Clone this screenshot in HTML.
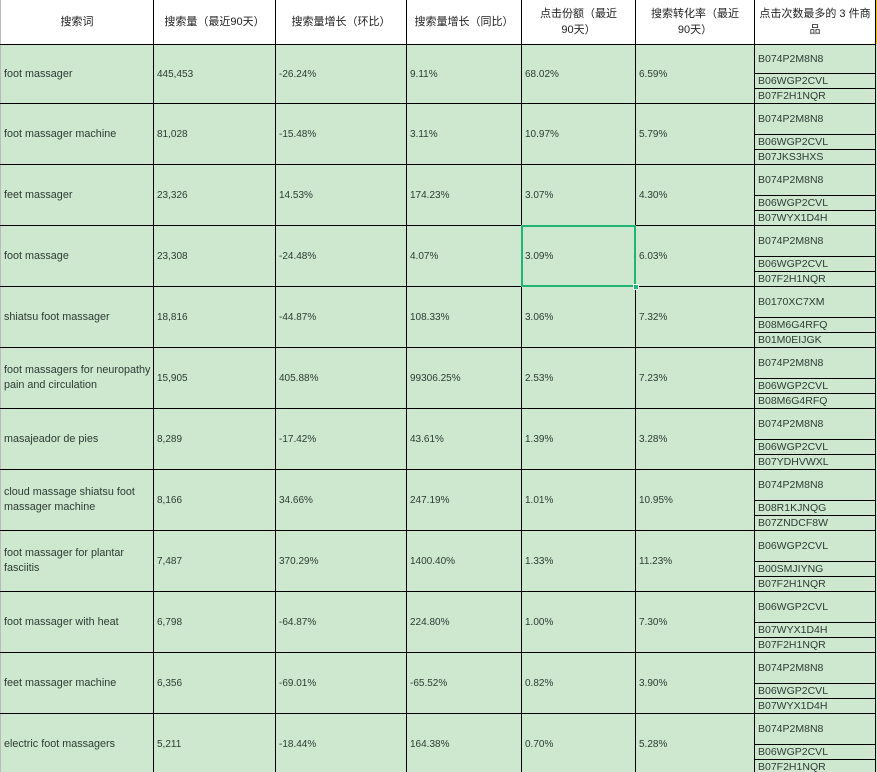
<!DOCTYPE html>
<html><head><meta charset="utf-8"><style>
html,body{margin:0;padding:0;background:#cde8cf;width:877px;height:772px;overflow:hidden;position:relative;font-family:"Liberation Sans","Noto Sans CJK SC",sans-serif;color:#2f3b35}
.hd{position:absolute;left:0;top:0;width:876px;height:44px;background:#fff}
.v{position:absolute;top:0;width:1px;height:772px;background:#000}
.h{position:absolute;left:0;width:876px;height:1px;background:#000}
.hs{position:absolute;left:754px;width:122px;height:1px;background:#000}
.r{position:absolute;left:0;width:876px}
.c{position:absolute;top:0;height:100%;display:flex;align-items:center;font-size:10px;line-height:15px;padding-left:3px;box-sizing:border-box}
.c1{left:1px;width:152px;font-size:10.8px;padding-right:2px}
.c2{left:154px;width:121px}.c3{left:276px;width:130px}.c4{left:407px;width:114px}.c5{left:522px;width:113px}.c6{left:636px;width:118px}
.s{position:absolute;left:755px;width:120px;font-size:10.5px;padding-left:3px;display:flex;align-items:center;box-sizing:border-box}
.th{position:absolute;top:0;height:44px;display:flex;align-items:center;justify-content:center;text-align:center;font-size:11px;line-height:16px;color:#222}
</style></head><body>
<div class="hd"></div>
<div class="th" style="left:1px;width:152px">搜索词</div>
<div class="th" style="left:154px;width:121px">搜索量（最近90天）</div>
<div class="th" style="left:276px;width:130px">搜索量增长（环比）</div>
<div class="th" style="left:407px;width:114px">搜索量增长（同比）</div>
<div class="th" style="left:522px;width:113px">点击份额（最近<br>90天）</div>
<div class="th" style="left:636px;width:118px">搜索转化率（最近<br>90天）</div>
<div class="th" style="left:755px;width:120px">点击次数最多的 3 件商<br>品</div>
<div class="v" style="left:0;background:#bbb"></div>
<div class="v" style="left:153px"></div><div class="v" style="left:275px"></div><div class="v" style="left:406px"></div><div class="v" style="left:521px"></div><div class="v" style="left:635px"></div><div class="v" style="left:754px"></div><div class="v" style="left:875px"></div>
<div style="position:absolute;left:876px;top:0;width:1px;height:44px;background:#f2c200"></div>
<div class="h" style="top:44px"></div><div class="h" style="top:103px"></div><div class="h" style="top:164px"></div><div class="h" style="top:225px"></div><div class="h" style="top:286px"></div><div class="h" style="top:347px"></div><div class="h" style="top:408px"></div><div class="h" style="top:469px"></div><div class="h" style="top:530px"></div><div class="h" style="top:591px"></div><div class="h" style="top:652px"></div><div class="h" style="top:713px"></div>

<div class="r" style="top:45px;height:58px"><div class="c c1">foot massager</div><div class="c c2">445,453</div><div class="c c3">-26.24%</div><div class="c c4">9.11%</div><div class="c c5">68.02%</div><div class="c c6">6.59%</div></div>
<div class="s" style="top:45px;height:28px">B074P2M8N8</div><div class="hs" style="top:73px"></div><div class="s" style="top:74px;height:14px">B06WGP2CVL</div><div class="hs" style="top:88px"></div><div class="s" style="top:89px;height:14px">B07F2H1NQR</div>

<div class="r" style="top:104px;height:60px"><div class="c c1">foot massager machine</div><div class="c c2">81,028</div><div class="c c3">-15.48%</div><div class="c c4">3.11%</div><div class="c c5">10.97%</div><div class="c c6">5.79%</div></div>
<div class="s" style="top:104px;height:30px">B074P2M8N8</div><div class="hs" style="top:134px"></div><div class="s" style="top:135px;height:14px">B06WGP2CVL</div><div class="hs" style="top:149px"></div><div class="s" style="top:150px;height:14px">B07JKS3HXS</div>

<div class="r" style="top:165px;height:60px"><div class="c c1">feet massager</div><div class="c c2">23,326</div><div class="c c3">14.53%</div><div class="c c4">174.23%</div><div class="c c5">3.07%</div><div class="c c6">4.30%</div></div>
<div class="s" style="top:165px;height:30px">B074P2M8N8</div><div class="hs" style="top:195px"></div><div class="s" style="top:196px;height:14px">B06WGP2CVL</div><div class="hs" style="top:210px"></div><div class="s" style="top:211px;height:14px">B07WYX1D4H</div>

<div class="r" style="top:226px;height:60px"><div class="c c1">foot massage</div><div class="c c2">23,308</div><div class="c c3">-24.48%</div><div class="c c4">4.07%</div><div class="c c5">3.09%</div><div class="c c6">6.03%</div></div>
<div class="s" style="top:226px;height:30px">B074P2M8N8</div><div class="hs" style="top:256px"></div><div class="s" style="top:257px;height:14px">B06WGP2CVL</div><div class="hs" style="top:271px"></div><div class="s" style="top:272px;height:14px">B07F2H1NQR</div>

<div class="r" style="top:287px;height:60px"><div class="c c1">shiatsu foot massager</div><div class="c c2">18,816</div><div class="c c3">-44.87%</div><div class="c c4">108.33%</div><div class="c c5">3.06%</div><div class="c c6">7.32%</div></div>
<div class="s" style="top:287px;height:30px">B0170XC7XM</div><div class="hs" style="top:317px"></div><div class="s" style="top:318px;height:14px">B08M6G4RFQ</div><div class="hs" style="top:332px"></div><div class="s" style="top:333px;height:14px">B01M0EIJGK</div>

<div class="r" style="top:348px;height:60px"><div class="c c1">foot massagers for neuropathy pain and circulation</div><div class="c c2">15,905</div><div class="c c3">405.88%</div><div class="c c4">99306.25%</div><div class="c c5">2.53%</div><div class="c c6">7.23%</div></div>
<div class="s" style="top:348px;height:30px">B074P2M8N8</div><div class="hs" style="top:378px"></div><div class="s" style="top:379px;height:14px">B06WGP2CVL</div><div class="hs" style="top:393px"></div><div class="s" style="top:394px;height:14px">B08M6G4RFQ</div>

<div class="r" style="top:409px;height:60px"><div class="c c1">masajeador de pies</div><div class="c c2">8,289</div><div class="c c3">-17.42%</div><div class="c c4">43.61%</div><div class="c c5">1.39%</div><div class="c c6">3.28%</div></div>
<div class="s" style="top:409px;height:30px">B074P2M8N8</div><div class="hs" style="top:439px"></div><div class="s" style="top:440px;height:14px">B06WGP2CVL</div><div class="hs" style="top:454px"></div><div class="s" style="top:455px;height:14px">B07YDHVWXL</div>

<div class="r" style="top:470px;height:60px"><div class="c c1">cloud massage shiatsu foot massager machine</div><div class="c c2">8,166</div><div class="c c3">34.66%</div><div class="c c4">247.19%</div><div class="c c5">1.01%</div><div class="c c6">10.95%</div></div>
<div class="s" style="top:470px;height:30px">B074P2M8N8</div><div class="hs" style="top:500px"></div><div class="s" style="top:501px;height:14px">B08R1KJNQG</div><div class="hs" style="top:515px"></div><div class="s" style="top:516px;height:14px">B07ZNDCF8W</div>

<div class="r" style="top:531px;height:60px"><div class="c c1">foot massager for plantar<br>fasciitis</div><div class="c c2">7,487</div><div class="c c3">370.29%</div><div class="c c4">1400.40%</div><div class="c c5">1.33%</div><div class="c c6">11.23%</div></div>
<div class="s" style="top:531px;height:30px">B06WGP2CVL</div><div class="hs" style="top:561px"></div><div class="s" style="top:562px;height:14px">B00SMJIYNG</div><div class="hs" style="top:576px"></div><div class="s" style="top:577px;height:14px">B07F2H1NQR</div>

<div class="r" style="top:592px;height:60px"><div class="c c1">foot massager with heat</div><div class="c c2">6,798</div><div class="c c3">-64.87%</div><div class="c c4">224.80%</div><div class="c c5">1.00%</div><div class="c c6">7.30%</div></div>
<div class="s" style="top:592px;height:30px">B06WGP2CVL</div><div class="hs" style="top:622px"></div><div class="s" style="top:623px;height:14px">B07WYX1D4H</div><div class="hs" style="top:637px"></div><div class="s" style="top:638px;height:14px">B07F2H1NQR</div>

<div class="r" style="top:653px;height:60px"><div class="c c1">feet massager machine</div><div class="c c2">6,356</div><div class="c c3">-69.01%</div><div class="c c4">-65.52%</div><div class="c c5">0.82%</div><div class="c c6">3.90%</div></div>
<div class="s" style="top:653px;height:30px">B074P2M8N8</div><div class="hs" style="top:683px"></div><div class="s" style="top:684px;height:14px">B06WGP2CVL</div><div class="hs" style="top:698px"></div><div class="s" style="top:699px;height:14px">B07WYX1D4H</div>

<div class="r" style="top:714px;height:60px"><div class="c c1">electric foot massagers</div><div class="c c2">5,211</div><div class="c c3">-18.44%</div><div class="c c4">164.38%</div><div class="c c5">0.70%</div><div class="c c6">5.28%</div></div>
<div class="s" style="top:714px;height:30px">B074P2M8N8</div><div class="hs" style="top:744px"></div><div class="s" style="top:745px;height:14px">B06WGP2CVL</div><div class="hs" style="top:759px"></div><div class="s" style="top:760px;height:14px">B07F2H1NQR</div>

<div style="position:absolute;left:521px;top:225px;width:115px;height:62px;box-sizing:border-box;border:2px solid #21b573"></div>
<div style="position:absolute;left:633px;top:284px;width:4px;height:4px;background:#21b573;border:1px solid #fff"></div>
</body></html>
